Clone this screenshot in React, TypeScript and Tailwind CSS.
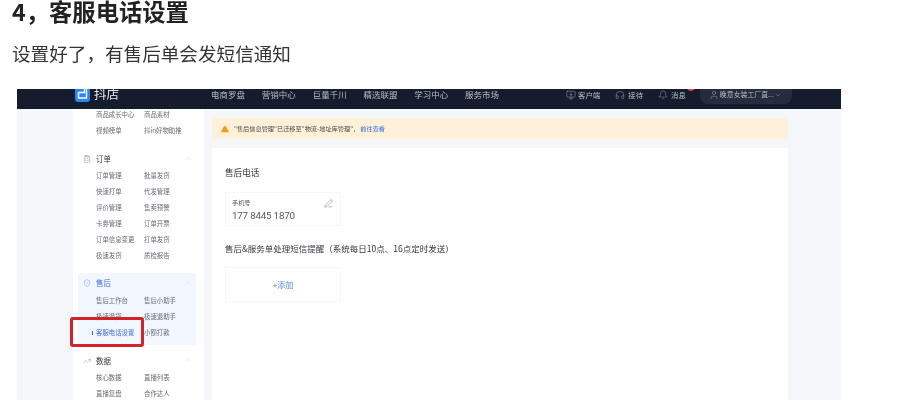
import { Bell, ChevronDown, ChevronUp, ClipboardList, Headphones, MonitorDown, PenLine, ShieldCheck, TrendingUp, TriangleAlert, User } from "lucide-react";

const navLinks = ["电商罗盘", "营销中心", "巨量千川", "精选联盟", "学习中心", "服务市场"];

function Row({ left, right }: { left: string; right: string }) {
  return (
    <div className="flex h-[16px] items-center text-[6.4px] text-[#666a73]">
      <span className="w-[48px] shrink-0 whitespace-nowrap">{left}</span>
      <span className="whitespace-nowrap">{right}</span>
    </div>
  );
}

function SectionHead({ title, icon, blue }: { title: string; icon: React.ReactNode; blue?: boolean }) {
  return (
    <div className={`flex h-[17px] items-center text-[7.5px] ${blue ? "text-[#3f6fd8]" : "text-[#33363d]"}`}>
      <span className="flex w-[13px] shrink-0 items-center">{icon}</span>
      <span className="flex-1">{title}</span>
      <ChevronUp size={9} strokeWidth={1} className="mr-[3px] text-[#c4c6cc]" />
    </div>
  );
}

export default function App() {
  return (
    <div className="h-[400px] w-[901px] overflow-hidden bg-white font-['Noto_Sans_CJK_SC','Noto_Sans',sans-serif]">
      <h1 className="ml-3 h-[23px] text-[23.3px] leading-[22px] font-bold text-[#222] blur-[0.3px]">4，客服电话设置</h1>
      <p className="mt-[17px] ml-3 h-[26px] text-[18.6px] leading-[26px] text-[#333] blur-[0.3px]">设置好了，有售后单会发短信通知</p>

      <div className="relative mt-[23px] ml-[17px] flex h-[311px] w-[824px] flex-col overflow-hidden bg-[#f5f6fa] blur-[0.45px]">
        {/* top bar */}
        <div className="flex h-[20px] shrink-0 items-start bg-[#141c2e] text-[8.5px] text-[#b8bcc5]">
          <div className="ml-[58px] flex w-[136px] shrink-0 items-start gap-[4px]">
            <svg width="15" height="17" viewBox="0 0 15 17" className="mt-[-4px]">
              <rect width="15" height="17" rx="3" fill="#2f86f2" />
              <path d="M3.5 7.5h6V4M3.5 7.5v5.5h8V4" fill="none" stroke="#fff" strokeWidth="1.4" />
            </svg>
            <span className="text-[12.5px] leading-[10px] text-[#e4e6ea]">抖店</span>
          </div>
          <div className="flex h-[11px] items-center gap-[16.8px] whitespace-nowrap">
            {navLinks.map((link) => (
              <span key={link}>{link}</span>
            ))}
          </div>
          <div className="ml-[67px] flex h-[11px] items-center text-[7.4px]">
            <MonitorDown size={10} strokeWidth={1} className="mr-[2px]" />
            <span className="mr-[15px] whitespace-nowrap">客户端</span>
            <Headphones size={10} strokeWidth={1} className="mr-[3px]" />
            <span className="mr-[15px] whitespace-nowrap">接待</span>
            <Bell size={10} strokeWidth={1} className="mr-[3px]" />
            <span className="relative mr-[14px] whitespace-nowrap">
              消息
              <span className="absolute top-[-6px] left-[16px] h-[8px] w-[8px] rounded-full bg-[#e0474a]" />
            </span>
            <div className="mt-[4px] flex h-[15px] w-[92px] items-center rounded-b-[8px] bg-[#252c3d] pb-[4px] pl-[9px] text-[6.9px] whitespace-nowrap">
              <User size={10} strokeWidth={1} className="mr-[1px] shrink-0" />
              晚意女装工厂直...
              <ChevronDown size={8} strokeWidth={1} className="shrink-0" />
            </div>
          </div>
        </div>

        <div className="flex min-h-0 flex-1">
          {/* sidebar */}
          <div className="ml-[56px] w-[131px] shrink-0 bg-white">
            <div className="mt-[-2px] pl-[23px]">
              <Row left="商品成长中心" right="商品素材" />
              <Row left="视频榜单" right="抖in好物助推" />
            </div>
            <div className="mt-[11px] pr-[8px] pl-[5px]">
              <div className="pl-[5px]">
                <SectionHead title="订单" icon={<ClipboardList size={8} strokeWidth={1} className="text-[#555]" />} />
              </div>
              <div className="mt-[1px] pl-[18px]">
                <Row left="订单管理" right="批量发货" />
                <Row left="快速打单" right="代发管理" />
                <Row left="评价管理" right="售卖预警" />
                <Row left="卡券管理" right="订单开票" />
                <Row left="订单信息变更" right="打单发货" />
                <Row left="极速发货" right="质检报告" />
              </div>
              <div className="mt-[9px] h-[72px] rounded-[3px] bg-[#f2f6fd] pt-[1px] pl-[5px]">
                <SectionHead title="售后" blue icon={<ShieldCheck size={8} strokeWidth={1} />} />
                <div className="mt-[2px] pl-[13px]">
                  <Row left="售后工作台" right="售后小助手" />
                  <Row left="极速退货" right="极速退助手" />
                  <div className="flex h-[16px] items-center text-[6.4px] text-[#666a73]">
                    <span className="relative w-[48px] shrink-0 whitespace-nowrap text-[#3f6fd8]">
                      <span className="absolute top-[3px] left-[-4px] h-[4px] w-[1px] bg-[#2f5fc8]" />
                      客服电话设置
                    </span>
                    <span className="whitespace-nowrap">小额打款</span>
                  </div>
                </div>
              </div>
              <div className="mt-[7px] pl-[5px]">
                <SectionHead title="数据" icon={<TrendingUp size={8} strokeWidth={1} className="text-[#777]" />} />
              </div>
              <div className="mt-[1px] pl-[18px]">
                <Row left="核心数据" right="直播列表" />
                <Row left="直播复盘" right="合作达人" />
              </div>
            </div>
          </div>

          {/* main */}
          <div className="ml-[8px] w-[576px] shrink-0 pt-[9px]">
            <div className="flex h-[21px] items-center rounded-[2px] bg-[#fff1d9] pl-[9px] text-[6.2px] text-[#4a4a4a]">
              <TriangleAlert size={8} fill="#f0a020" stroke="#f0a020" className="mr-[5px]" />
              <span>"售后信息管理"已迁移至"物流-地址库管理"，</span>
              <span className="ml-[1px] text-[#3f6fd8]">前往查看</span>
            </div>
            <div className="mt-[9px] h-[300px] rounded-[2px] bg-white pt-[17px] pl-[13px]">
              <div className="text-[8.6px] leading-[14px] text-[#33363d]">售后电话</div>
              <div className="mt-[13px] flex h-[34px] w-[116px] flex-col border border-[#f7f7f9] pt-[5px] pl-[6px]">
                <div className="flex items-center justify-between pr-[7px] text-[6.2px] leading-[10px] text-[#555]">
                  手机号
                  <PenLine size={9} strokeWidth={1} className="text-[#444]" />
                </div>
                <div className="mt-[1px] font-['Roboto'] text-[9.8px] leading-[13px] tracking-[-0.2px] text-[#55575d]">177 8445 1870</div>
              </div>
              <div className="mt-[15px] text-[8.5px] leading-[14px] whitespace-nowrap text-[#33363d]">售后&服务单处理短信提醒（系统每日10点、16点定时发送）</div>
              <div className="mt-[12px] flex h-[35px] w-[116px] items-center justify-center border border-[#f7f7f9] text-[8px] text-[#5b7fd6]">
                +添加
              </div>
            </div>
          </div>
        </div>

        {/* red annotation */}
        <div className="absolute top-[228px] left-[53px] h-[30px] w-[74px] rounded-[3px] border-[3px] border-[#d2232a]" />
      </div>
    </div>
  );
}
